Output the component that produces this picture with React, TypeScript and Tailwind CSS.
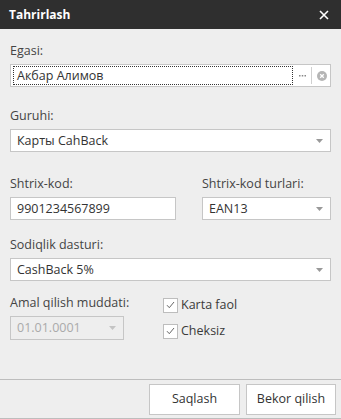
import React from "react";

const font = { fontFamily: '"Open Sans", "Liberation Sans", sans-serif' };

function Arrow() {
  return (
    <svg width="7" height="4" viewBox="0 0 7 4" className="shrink-0">
      <path d="M0 0h7L3.5 4z" fill="#999" />
    </svg>
  );
}

function Select({ value, className = "" }: { value: string; className?: string }) {
  return (
    <div className={`flex h-[23px] items-center border border-[#c6c6c6] bg-white pl-[6px] pr-[7px] ${className}`}>
      <span className="flex-1 whitespace-nowrap text-[12.5px] leading-4 text-[#333]">{value}</span>
      <Arrow />
    </div>
  );
}

function Label({ children }: { children: React.ReactNode }) {
  return <div className="mb-[5px] h-4 whitespace-nowrap text-[12.5px] leading-4 text-[#444]">{children}</div>;
}

function Check({ label }: { label: string }) {
  return (
    <div className="flex items-center gap-[3px]">
      <div className="flex h-[15px] w-[15px] items-center justify-center border border-[#bdbdbd] bg-white">
        <svg width="9" height="8" viewBox="0 0 9 8">
          <path d="M1 4.2l2.3 2.5L8 1" fill="none" stroke="#666" strokeWidth="1" />
        </svg>
      </div>
      <span className="whitespace-nowrap text-[12.5px] leading-4 text-[#3a3a3a]">{label}</span>
    </div>
  );
}

export default function App() {
  return (
    <div className="flex h-[419px] w-[341px] flex-col bg-[#eeeeee]" style={font}>
      {/* title bar */}
      <div className="flex h-[29px] shrink-0 items-center justify-between bg-[#2f2f2f] pl-[9px] pr-[12px]">
        <span className="text-[12px] font-bold text-white">Tahrirlash</span>
        <svg width="10" height="10" viewBox="0 0 10 10">
          <path d="M1 1l8 8M9 1l-8 8" stroke="#fff" strokeWidth="1.6" />
        </svg>
      </div>

      <div className="flex-1 px-[10px] pt-[14px]">
        <Label>Egasi:</Label>
        <div className="flex h-[23px] items-center border border-[#c6c6c6] bg-white pl-[2px] pr-[3px]">
          <div className="flex h-[19px] flex-1 items-center border border-dotted border-[#333] pl-[3px]">
            <span className="whitespace-nowrap text-[12.5px] leading-4 text-[#333]">Акбар Алимов</span>
          </div>
          <svg width="7" height="2" viewBox="0 0 7 2" className="ml-[6px]">
            <rect x="0" y="0" width="1.5" height="1.5" fill="#888" />
            <rect x="2.75" y="0" width="1.5" height="1.5" fill="#888" />
            <rect x="5.5" y="0" width="1.5" height="1.5" fill="#888" />
          </svg>
          <div className="mx-[5px] h-[17px] w-px bg-[#d0d0d0]" />
          <svg width="10" height="10" viewBox="0 0 10 10">
            <circle cx="5" cy="5" r="5" fill="#b5b5b5" />
            <path d="M3.2 3.2l3.6 3.6M6.8 3.2l-3.6 3.6" stroke="#fff" strokeWidth="1.3" />
          </svg>
        </div>

        <div className="mt-[21px]">
          <Label>Guruhi:</Label>
          <Select value="Карты CahBack" />
        </div>

        <div className="mt-[24px] flex gap-[26px]">
          <div className="w-[166px]">
            <Label>Shtrix-kod:</Label>
            <div className="flex h-[23px] items-center border border-[#c6c6c6] bg-white pl-[6px]">
              <span className="text-[12.5px] leading-4 text-[#333]">9901234567899</span>
            </div>
          </div>
          <div className="flex-1">
            <Label>Shtrix-kod turlari:</Label>
            <Select value="EAN13" />
          </div>
        </div>

        <div className="mt-[17px]">
          <Label>Sodiqlik dasturi:</Label>
          <Select value="CashBack 5%" />
        </div>

        <div className="mt-[14px] flex">
          <div className="w-[114px]">
            <Label>Amal qilish muddati:</Label>
            <div className="flex h-[24px] items-center border border-[#c6c6c6] bg-[#eeeeee] pl-[6px] pr-[7px]">
              <span className="flex-1 text-[12.5px] leading-4 text-[#aaa]">01.01.0001</span>
              <svg width="7" height="4" viewBox="0 0 7 4">
                <path d="M0 0h7L3.5 4z" fill="#c4c4c4" />
              </svg>
            </div>
          </div>
          <div className="ml-[39px] mt-[2px] flex flex-col gap-[10px]">
            <Check label="Karta faol" />
            <Check label="Cheksiz" />
          </div>
        </div>
      </div>

      {/* footer */}
      <div className="flex h-[40px] shrink-0 items-start justify-end gap-[6px] border-y border-[#bdbdbd] pr-[5px] pt-[4px]">
        <button className="h-[31px] w-[91px] border border-[#c6c6c6] bg-white text-[12.5px] text-[#333]">Saqlash</button>
        <button className="h-[31px] w-[90px] border border-[#c6c6c6] bg-white text-[12.5px] text-[#333]">Bekor qilish</button>
      </div>
    </div>
  );
}
